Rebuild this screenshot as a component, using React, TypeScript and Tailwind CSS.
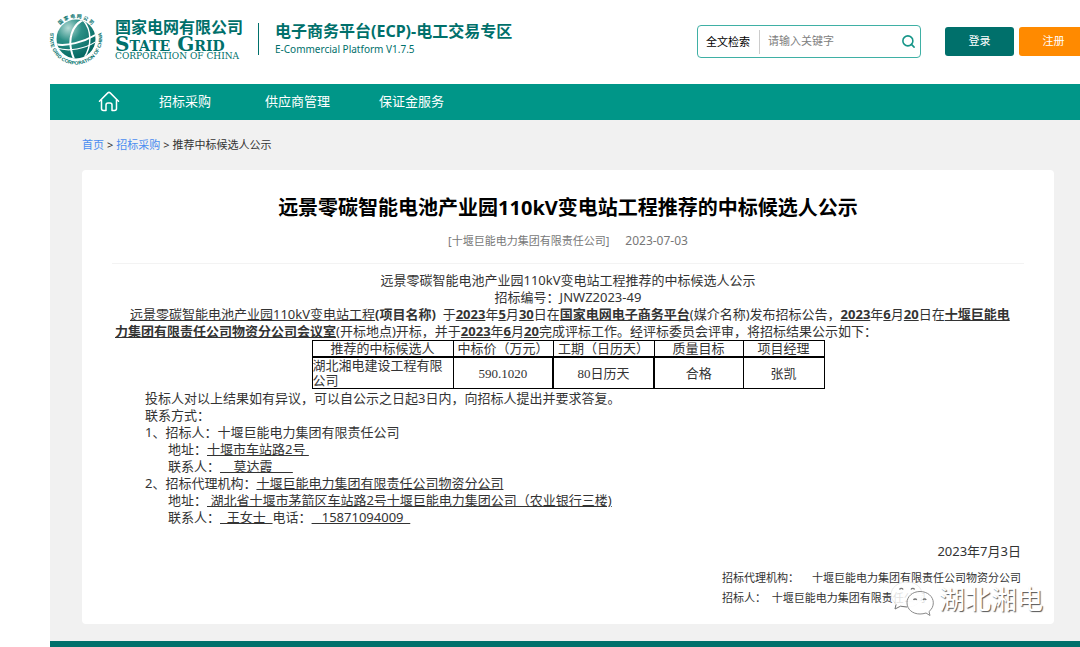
import type { ReactNode } from "react";
import { Search } from "lucide-react";

const NAV_ITEMS = [
  { label: "招标采购", className: "ml-[39px]" },
  { label: "供应商管理", className: "ml-[54px]" },
  { label: "保证金服务", className: "ml-[49px]" },
];

const TABLE_HEADERS = ["推荐的中标候选人", "中标价（万元）", "工期（日历天）", "质量目标", "项目经理"];

function GlobeLogo() {
  return (
    <svg viewBox="0 0 54 54" className="-ml-px size-[54px] shrink-0" aria-hidden="true">
      <defs>
        <radialGradient id="globe" cx="0.3" cy="0.22" r="0.85">
          <stop offset="0" stopColor="#b5dbd6" />
          <stop offset="0.4" stopColor="#2b8f86" />
          <stop offset="1" stopColor="#00645e" />
        </radialGradient>
        <clipPath id="globe-clip">
          <circle cx="27" cy="27" r="19.5" />
        </clipPath>
        <path id="ring-top" d="M8.8 16.5 A21 21 0 0 1 45.2 16.5" />
        <path id="ring-bottom" d="M3.2 15.8 A26.1 26.1 0 1 0 50.8 15.8" />
      </defs>
      <circle cx="27" cy="27" r="19.5" fill="url(#globe)" />
      <g clipPath="url(#globe-clip)" fill="none" stroke="#fff">
        <path d="M6 32 C17 35 35 30 48 22" strokeWidth="2" />
        <path d="M8 36 C20 40 36 37 48 29" strokeWidth="1.2" />
        <path d="M36 7 C23 12 17 28 25 47" strokeWidth="2" />
        <path d="M34 8 C43 18 43 34 35 46" strokeWidth="1.4" />
      </g>
      <g fill="#00706b" fontWeight="700">
        <text fontSize="5" fontFamily="'Noto Sans CJK SC', sans-serif">
          <textPath href="#ring-top" startOffset="50%" textAnchor="middle">国 家 电 网 公 司</textPath>
        </text>
        <text fontSize="5" fontFamily="'Liberation Sans', sans-serif">
          <textPath href="#ring-bottom" startOffset="50%" textAnchor="middle">STATE GRID CORPORATION OF CHINA</textPath>
        </text>
      </g>
    </svg>
  );
}

function HomeIcon() {
  return (
    <svg viewBox="0 0 22 22" className="size-[22px]" fill="none" stroke="currentColor" strokeWidth="1.5" strokeLinecap="round" strokeLinejoin="round" aria-hidden="true">
      <path d="M1.500 10.200 L9.800 1.900 Q11 0.900 12.200 1.900 L20.500 10.200" />
      <path d="M3.500 9 V17.500 Q3.500 19.500 5.500 19.500 H8 V14 Q8 12 10 12 H12 Q14 12 14 14 V19.500 H16.500 Q18.500 19.500 18.500 17.500 V9" />
    </svg>
  );
}

function Watermark() {
  return (
    <div className="pointer-events-none absolute right-[11px] bottom-[7px] flex items-center gap-[5px]">
      <svg viewBox="0 0 44 36" className="h-9 w-11" aria-hidden="true">
        <path d="M17 1 C8 1 1 6.500 1 13.500 C1 17.500 3 20.500 6.500 23 L5 28 L10.500 25.200 C13 26 15 26.200 17.500 26 C26 26 32 20.500 32 13.500 C32 6.500 26 1 17 1 Z" fill="#fff" fillOpacity="0.85" stroke="#e4e4e4" strokeWidth="0.8" />
        <path d="M6 23.500 L5 28 L10.500 25.200 L17 26" fill="none" stroke="#777" strokeWidth="1" />
        <path d="M30 10.500 C22.500 10.500 17 15.500 17 21.800 C17 28.300 22.500 33 30 33 C32 33 34 32.700 36 32 L40 34.500 L39 30.500 C42 28.300 43.300 25 43.300 21.800 C43.300 15.500 37.500 10.500 30 10.500 Z" fill="#fff" fillOpacity="0.85" stroke="#8a8a8a" strokeWidth="1" />
        <g fill="none" stroke="#777" strokeWidth="1.300">
          <path d="M9.500 8.500 a2 2 0 0 1 3.600 0" />
          <path d="M21 8.500 a2 2 0 0 1 3.600 0" />
          <path d="M23.500 19 a1.800 1.800 0 0 1 3.200 0" />
          <path d="M33 19 a1.800 1.800 0 0 1 3.200 0" />
        </g>
      </svg>
      <span className="text-[26px] leading-9 text-white [text-shadow:1px_1px_1px_#555]">湖北湘电</span>
    </div>
  );
}

function Key({ children }: { children: ReactNode }) {
  return <b className="underline">{children}</b>;
}

function SiteHeader() {
  return (
    <header className="flex h-[84px] items-center">
      <div className="flex shrink-0 items-center pb-1.5 text-[#00706b]">
        <GlobeLogo />
        <div className="ml-3 w-[128px] whitespace-nowrap">
          <div className="text-[16px] leading-[18px] font-bold">国家电网有限公司</div>
          <div className="font-['DejaVu_Serif',serif] text-[20px] leading-[16px] font-bold [font-variant:small-caps]">State Grid</div>
          <div className="font-['DejaVu_Serif',serif] text-[9px] leading-[8px]">CORPORATION OF CHINA</div>
        </div>
        <div className="ml-[15px] h-8 w-px bg-[#00706b]" />
        <div className="ml-4 whitespace-nowrap">
          <div className="text-[16px] leading-[20px] font-bold">电子商务平台(ECP)-电工交易专区</div>
          <div className="text-[10px] leading-[16px]">E-Commercial Platform V1.7.5</div>
        </div>
      </div>
      <div className="-mr-2 ml-auto flex shrink-0 items-center pb-px text-[11px]">
        <form className="flex h-[33px] w-[224px] items-center rounded border border-[#3fb0a5] pr-1">
          <label htmlFor="keyword" className="border-r border-[#ccc] pr-[9px] pl-2 leading-6 text-black">全文检索</label>
          <input id="keyword" type="text" placeholder="请输入关键字" className="min-w-0 flex-1 px-2 outline-none placeholder:text-[#808080]" />
          <button type="button" aria-label="搜索" className="text-[#159588]">
            <Search size={15} strokeWidth={2.5} />
          </button>
        </form>
        <button type="button" className="ml-6 h-[29px] w-[69px] rounded-[3px] bg-[#00706b] text-white">登录</button>
        <button type="button" className="ml-[5px] h-[29px] w-[69px] rounded-[3px] bg-[#ff8a00] text-white">注册</button>
      </div>
    </header>
  );
}

function CandidateTable() {
  return (
    <table className="mx-auto w-[512px] table-fixed border-collapse border border-black text-center font-['Liberation_Serif','Noto_Sans_CJK_SC',serif] leading-[15px]">
      <colgroup>
        <col className="w-[141px]" />
        <col className="w-[100px]" />
        <col className="w-[101px]" />
        <col className="w-[89px]" />
        <col className="w-[81px]" />
      </colgroup>
      <thead>
        <tr className="border-b-2 border-black">
          {TABLE_HEADERS.map((header) => (
            <th key={header} className="border-x border-black p-0 font-normal whitespace-nowrap">{header}</th>
          ))}
        </tr>
      </thead>
      <tbody>
        <tr>
          <td className="border border-black p-0 text-left">湖北湘电建设工程有限公司</td>
          <td className="border border-black p-0">590.1020</td>
          <td className="border-x-2 border-black p-0">80日历天</td>
          <td className="border border-black p-0">合格</td>
          <td className="border border-black p-0">张凯</td>
        </tr>
      </tbody>
    </table>
  );
}

function Notice() {
  return (
    <article className="relative mt-[14px] mr-[26px] ml-8 rounded bg-white px-[30px] pt-[24px] pb-[16px]">
      <h1 className="text-center text-[20px] leading-[28px] font-bold text-black">
        远景零碳智能电池产业园110kV变电站工程推荐的中标候选人公示
      </h1>
      <div className="flex justify-center gap-4 border-b border-[#f3f3f3] pt-[9px] pb-[12px] leading-[20px] text-[#777]">
        <span className="text-[11px]">[十堰巨能电力集团有限责任公司]</span>
        <time className="text-[12px]">2023-07-03</time>
      </div>

      <div className="px-[3px] pt-[8px] text-[13px] leading-[17px] text-[#333]">
        <p className="text-center">远景零碳智能电池产业园110kV变电站工程推荐的中标候选人公示</p>
        <p className="text-center">招标编号：JNWZ2023-49</p>
        <p className="indent-[15px] break-all">
          <u>远景零碳智能电池产业园110kV变电站工程</u>
          <b>(项目名称)</b>&nbsp; 于<Key>2023</Key>年<Key>5</Key>月<Key>30</Key>日在<Key>国家电网电子商务平台</Key>
          (媒介名称)发布招标公告，<Key>2023</Key>年<Key>6</Key>月<Key>20</Key>日在
          <Key>十堰巨能电力集团有限责任公司物资分公司会议室</Key>
          (开标地点)开标，并于<Key>2023</Key>年<Key>6</Key>月<Key>20</Key>完成评标工作。经评标委员会评审，将招标结果公示如下：
        </p>

        <CandidateTable />

        <div className="pt-px pl-[30px]">
          <p>投标人对以上结果如有异议，可以自公示之日起3日内，向招标人提出并要求答复。</p>
          <p>联系方式：</p>
          <p>1、招标人：十堰巨能电力集团有限责任公司</p>
          <div className="pl-[23px]">
            <p>地址：<u>十堰市车站路2号&nbsp;</u></p>
            <p>联系人：<u>&nbsp;&nbsp;&nbsp;&nbsp;莫达霞&nbsp;&nbsp;&nbsp;&nbsp;&nbsp;&nbsp;</u></p>
          </div>
          <p>2、招标代理机构：<u>十堰巨能电力集团有限责任公司物资分公司</u></p>
          <div className="pl-[23px]">
            <p>地址：<u>&nbsp;湖北省十堰市茅箭区车站路2号十堰巨能电力集团公司（农业银行三楼)</u></p>
            <p>联系人：<u>&nbsp;&nbsp;王女士&nbsp;&nbsp;</u>电话：<u>&nbsp;&nbsp;&nbsp;15871094009&nbsp;&nbsp;</u></p>
          </div>
        </div>

        <p className="pt-[17px] text-right">2023年7月3日</p>
        <div className="ml-auto w-[299px] pt-[8px] text-[11px] leading-[20px]">
          <p className="flex justify-between">招标代理机构：<span>十堰巨能电力集团有限责任公司物资分公司</span></p>
          <p>招标人：&nbsp;&nbsp;十堰巨能电力集团有限责任公司</p>
        </div>
      </div>

      <Watermark />
    </article>
  );
}

export default function App() {
  return (
    <div className="overflow-hidden bg-white pl-[50px] font-['Noto_Sans','Noto_Sans_CJK_SC',sans-serif]">
      <SiteHeader />
      <nav className="flex h-9 items-center bg-[#009688] pl-12 text-[13px] text-white">
        <a href="#home" aria-label="首页"><HomeIcon /></a>
        {NAV_ITEMS.map((item) => (
          <a key={item.label} href="#nav" className={item.className}>{item.label}</a>
        ))}
      </nav>
      <main className="bg-[#f1f1f1] pt-[15px] pb-[17px]">
        <div className="flex gap-[3px] pl-8 text-[11px] leading-[20px] text-[#333]">
          <a href="#home" className="text-[#4a8df0]">首页</a>
          <span>&gt;</span>
          <a href="#bidding" className="text-[#4a8df0]">招标采购</a>
          <span>&gt;</span>
          <span>推荐中标候选人公示</span>
        </div>
        <div className="pt-px">
          <Notice />
        </div>
      </main>
      <footer className="h-[6px] bg-[#00706b]" />
    </div>
  );
}
